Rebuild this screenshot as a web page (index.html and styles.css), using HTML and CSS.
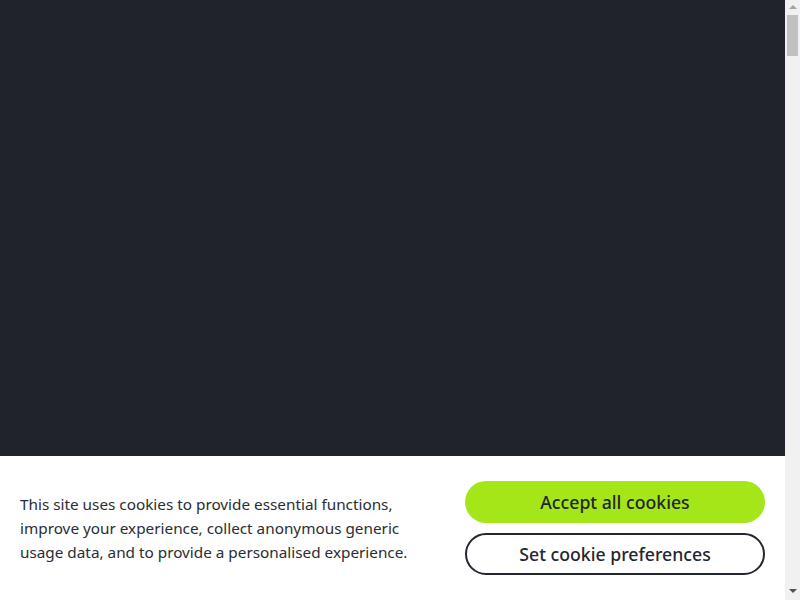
FILE: index.html
```html
<!DOCTYPE html>
<html lang="en">
<head>
<meta charset="utf-8">
<title>Cookies</title>
<link rel="stylesheet" href="styles.css">
</head>
<body>
<main class="page"></main>
<div class="scrollbar" aria-hidden="true">
  <span class="arrow arrow-up"></span>
  <span class="thumb"></span>
  <span class="arrow arrow-down"></span>
</div>
<div class="cookie-banner">
  <p class="cookie-text">This site uses cookies to provide essential functions, improve your experience, collect anonymous generic usage data, and to provide a personalised experience.</p>
  <div class="cookie-actions">
    <button class="btn btn-accept">Accept all cookies</button>
    <button class="btn btn-prefs">Set cookie preferences</button>
  </div>
</div>
</body>
</html>
```
FILE: styles.css
```css
html, body {
  margin: 0;
  padding: 0;
  background: #20232b;
  overflow: hidden;
}
body {
  font-family: "Noto Sans", "Liberation Sans", sans-serif;
  height: 100vh;
}
.page {
  height: 100%;
}
.scrollbar {
  position: fixed;
  top: 0;
  right: 0;
  bottom: 0;
  width: 15px;
  background: #f1f1f1;
}
.thumb {
  position: absolute;
  top: 15px;
  left: 2px;
  width: 11px;
  height: 41px;
  background: #c1c1c1;
}
.arrow {
  position: absolute;
  left: 4px;
  width: 0;
  height: 0;
  border-left: 4px solid transparent;
  border-right: 4px solid transparent;
}
.arrow-up {
  top: 5px;
  border-bottom: 4px solid #a3a3a3;
}
.arrow-down {
  bottom: 7px;
  border-top: 4px solid #505050;
}
.cookie-banner {
  position: fixed;
  left: 0;
  right: 15px;
  bottom: 0;
  background: #ffffff;
  display: flex;
  align-items: center;
  justify-content: space-between;
  padding: 25px 20px;
  height: 94px;
  box-sizing: content-box;
}
.cookie-text {
  margin: 0;
  width: 420px;
  font-size: 15.3px;
  line-height: 24px;
  color: #2a2c33;
}
.cookie-actions {
  display: flex;
  flex-direction: column;
  gap: 10px;
  width: 300px;
}
.btn {
  font-family: inherit;
  height: 42px;
  border-radius: 21px;
  font-size: 17.7px;
  font-weight: 500;
  color: #23262e;
  cursor: pointer;
  padding: 0;
}
.btn-accept {
  background: #a4e618;
  border: none;
}
.btn-prefs {
  background: #ffffff;
  border: 2px solid #23262e;
}
```
